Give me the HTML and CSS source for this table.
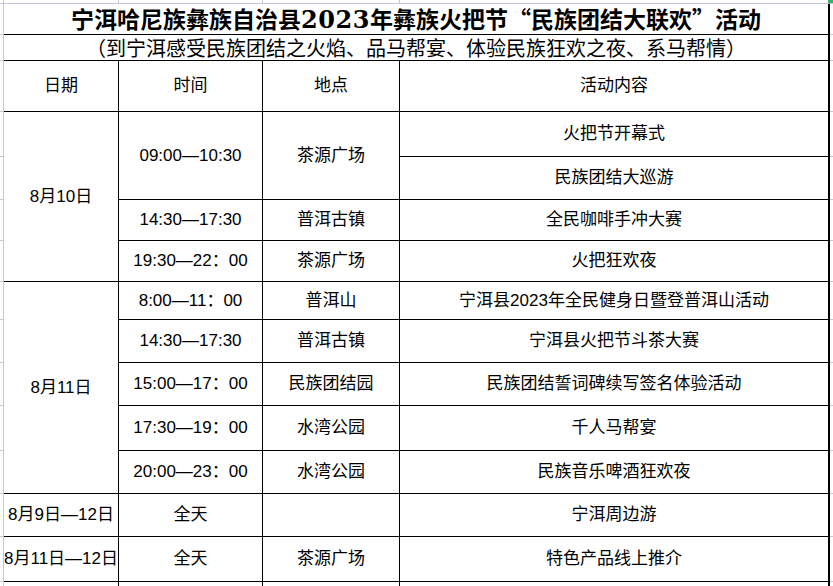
FILE: index.html
```html
<!DOCTYPE html>
<html lang="zh-CN">
<head>
<meta charset="utf-8">
<title>宁洱火把节活动安排</title>
<link rel="stylesheet" href="styles.css">
</head>
<body>
<table class="sheet">
  <tr class="r-top">
    <td class="g w0"></td>
    <td class="t w1"></td>
    <td class="t w2"></td>
    <td class="t w3"></td>
    <td class="t t4 w4"></td>
    <td class="gr-top w5"></td>
  </tr>
  <tr class="r-title">
    <td class="g"></td>
    <td class="c last title" colspan="4">宁洱哈尼族彝族自治县<span class="num">2023</span>年彝族火把节“民族团结大联欢”活动</td>
    <td class="gr"></td>
  </tr>
  <tr class="r-sub">
    <td class="g"></td>
    <td class="c last sub" colspan="4">（到宁洱感受民族团结之火焰、品马帮宴、体验民族狂欢之夜、系马帮情）</td>
    <td class="gr"></td>
  </tr>
  <tr class="h51">
    <td class="g"></td>
    <td class="c">日期</td>
    <td class="c">时间</td>
    <td class="c">地点</td>
    <td class="c last">活动内容</td>
    <td class="gr"></td>
  </tr>
  <tr class="h45">
    <td class="g"></td>
    <td class="c" rowspan="4">8月10日</td>
    <td class="c" rowspan="2">09:00—10:30</td>
    <td class="c" rowspan="2">茶源广场</td>
    <td class="c last">火把节开幕式</td>
    <td class="gr"></td>
  </tr>
  <tr class="h43">
    <td class="g"></td>
    <td class="c last">民族团结大巡游</td>
    <td class="gr"></td>
  </tr>
  <tr class="h41">
    <td class="g"></td>
    <td class="c">14:30—17:30</td>
    <td class="c">普洱古镇</td>
    <td class="c last">全民咖啡手冲大赛</td>
    <td class="gr"></td>
  </tr>
  <tr class="h41">
    <td class="g"></td>
    <td class="c">19:30—22：00</td>
    <td class="c">茶源广场</td>
    <td class="c last">火把狂欢夜</td>
    <td class="gr"></td>
  </tr>
  <tr class="h38">
    <td class="g"></td>
    <td class="c" rowspan="5">8月11日</td>
    <td class="c">8:00—11：00</td>
    <td class="c">普洱山</td>
    <td class="c last">宁洱县2023年全民健身日暨登普洱山活动</td>
    <td class="gr"></td>
  </tr>
  <tr class="h43">
    <td class="g"></td>
    <td class="c">14:30—17:30</td>
    <td class="c">普洱古镇</td>
    <td class="c last">宁洱县火把节斗茶大赛</td>
    <td class="gr"></td>
  </tr>
  <tr class="h43">
    <td class="g"></td>
    <td class="c">15:00—17：00</td>
    <td class="c">民族团结园</td>
    <td class="c last">民族团结誓词碑续写签名体验活动</td>
    <td class="gr"></td>
  </tr>
  <tr class="h45">
    <td class="g"></td>
    <td class="c">17:30—19：00</td>
    <td class="c">水湾公园</td>
    <td class="c last">千人马帮宴</td>
    <td class="gr"></td>
  </tr>
  <tr class="h43">
    <td class="g"></td>
    <td class="c">20:00—23：00</td>
    <td class="c">水湾公园</td>
    <td class="c last">民族音乐啤酒狂欢夜</td>
    <td class="gr"></td>
  </tr>
  <tr class="h43">
    <td class="g"></td>
    <td class="c">8月9日—12日</td>
    <td class="c">全天</td>
    <td class="c"></td>
    <td class="c last">宁洱周边游</td>
    <td class="gr"></td>
  </tr>
  <tr class="h45">
    <td class="g"></td>
    <td class="c">8月11日—12日</td>
    <td class="c">全天</td>
    <td class="c">茶源广场</td>
    <td class="c last">特色产品线上推介</td>
    <td class="gr"></td>
  </tr>
  <tr class="h-end">
    <td class="g"></td>
    <td class="c"></td>
    <td class="c"></td>
    <td class="c"></td>
    <td class="c last"></td>
    <td class="gr"></td>
  </tr>
</table>
</body>
</html>
```

FILE: styles.css
```css
html, body {
  margin: 0;
  padding: 0;
  background: #ffffff;
  overflow: hidden;
}

.sheet {
  border-collapse: separate;
  border-spacing: 0;
  table-layout: fixed;
  width: 833px;
  color: #000000;
  font-family: "Liberation Sans", "Noto Sans CJK SC", sans-serif;
  font-size: 17px;
}

.sheet td {
  box-sizing: border-box;
  padding: 0;
  text-align: center;
  vertical-align: middle;
  white-space: nowrap;
  overflow: visible;
}

.w0 { width: 4px; }
.w1 { width: 115px; }
.w2 { width: 144px; }
.w3 { width: 137px; }
.w4 { width: 430px; }
.w5 { width: 3px; }

.r-top { height: 4px; }
.r-title { height: 31px; }
.r-sub { height: 26px; }
.h38 { height: 38px; }
.h41 { height: 41px; }
.h43 { height: 43px; }
.h45 { height: 45px; }
.h51 { height: 51px; }
.h-end { height: 5px; }

/* spreadsheet gridlines outside the printed table */
.g {
  border-right: 1px solid #c3c7d8;
  border-bottom: 1px solid #c3c7d8;
}
.gr {
  border-bottom: 1px solid #c3c7d8;
}
.t {
  border-right: 1px solid #c3c7d8;
  border-bottom: 1px solid #c3c7d8;
}
.t4 {
  border-right: 2px solid #2fb56a;
}
.gr-top {
  background: #2fb56a;
  border-bottom: 1px solid #c3c7d8;
}

/* table cells */
.c {
  border-right: 1px solid #000000;
  border-bottom: 1px solid #000000;
  line-height: 20px;
}
.c.last {
  border-right: 2px solid #000000;
}
.h-end .c {
  border-bottom: 0;
}

.title {
  font-family: "Noto Sans CJK SC", sans-serif;
  font-weight: 700;
  font-size: 23px;
  line-height: 24px;
}
.title .num {
  font-family: "DejaVu Serif", serif;
  font-size: 24px;
  letter-spacing: 0.5px;
}

.sub {
  font-family: "Noto Sans CJK SC", sans-serif;
  font-size: 20px;
  line-height: 20px;
}
```
